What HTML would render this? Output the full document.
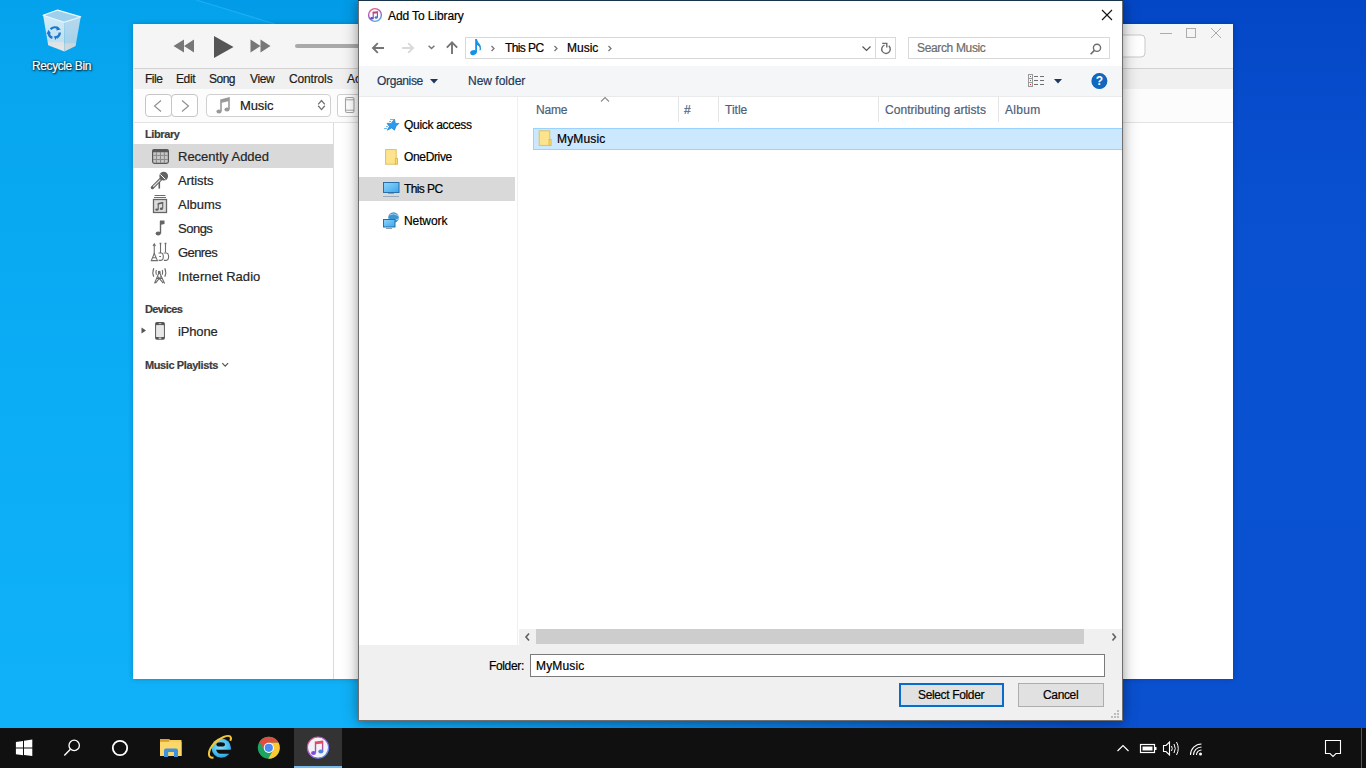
<!DOCTYPE html>
<html><head><meta charset="utf-8">
<style>
*{box-sizing:border-box}
html,body{margin:0;padding:0}
body{width:1366px;height:768px;overflow:hidden;position:relative;font-family:"Liberation Sans",sans-serif;
background:linear-gradient(90deg,rgba(10,80,203,0) 360px,rgba(10,100,212,.55) 700px,#0a50cd 1080px,#0a50cd 1366px),linear-gradient(180deg,#04a2ec 0px,#07a6ef 80px,#0badf5 400px,#10b1f8 728px);}
.a{position:absolute}
.t{position:absolute;white-space:nowrap;line-height:1;-webkit-text-stroke:0.2px currentColor}
svg{position:absolute;overflow:visible}
</style></head><body>

<div class="a" style="left:1122px;top:0px;width:244px;height:728px;background:linear-gradient(180deg,#0447c6 0px,#0850d0 200px,#0852d2 400px,#0a50cf 728px)"></div>
<div class="a" style="left:0px;top:0px;width:1366px;height:24px;background:linear-gradient(180deg,rgba(0,0,0,0),rgba(0,0,0,0))"></div>
<svg style="left:0px;top:0px;" width="400" height="30" viewBox="0 0 400 30"><path d="M275 24 L196 0 L400 0 L400 24 Z" fill="#0090e0" opacity=".35"/><path d="M196 0 L275 24" stroke="#3cc0ff" stroke-width="1.2" opacity=".45"/></svg>
<svg style="left:38px;top:6px;" width="48" height="50" viewBox="0 0 48 50">
<defs>
<linearGradient id="rbl" x1="0" y1="0" x2="0" y2="1"><stop offset="0" stop-color="#d2ebf7"/><stop offset=".72" stop-color="#bfe0f1"/><stop offset=".76" stop-color="#dfe3e6"/><stop offset="1" stop-color="#e6e6e6"/></linearGradient>
<linearGradient id="rbr" x1="0" y1="0" x2="0" y2="1"><stop offset="0" stop-color="#b4d9ee"/><stop offset=".74" stop-color="#a8d2ea"/><stop offset=".78" stop-color="#cdd6dc"/><stop offset="1" stop-color="#d5d8da"/></linearGradient>
</defs>
<path d="M5.1 9.2 L26.1 16.3 L26.4 45.4 L10.2 39.3 Z" fill="url(#rbl)"/>
<path d="M26.1 16.3 L42.7 10.9 L37.6 40 L26.4 45.4 Z" fill="url(#rbr)"/>
<path d="M5.1 9.2 L19.6 4.1 L42.7 10.9 L26.1 16.3 Z" fill="#9dd0ec" stroke="#eefaff" stroke-width="1.1" stroke-linejoin="round"/>
<g fill="none" stroke="#1c78cf" stroke-width="2.3">
<path d="M12.6 23.2 A5.6 5.6 0 0 1 20.2 22.6"/>
<path d="M21.8 26.6 A5.6 5.6 0 0 1 18.6 31.6"/>
<path d="M14.4 31.8 A5.6 5.6 0 0 1 10.8 26.2"/>
</g>
<g fill="#1c78cf">
<path d="M19 20.2 L22.8 23.4 L18.4 24.6z"/>
<path d="M19.8 29.6 L17.6 34 L15.8 30.4z"/>
<path d="M8.6 28.2 L10.4 23.8 L13 27.2z"/>
</g>
</svg>
<div class="t" style="left:32px;top:60px;font-size:12px;color:#fff;letter-spacing:-0.4px;text-shadow:0 0 2px rgba(0,0,0,.95),1px 1px 2px rgba(0,0,0,.9);">Recycle Bin</div>
<div class="a" style="left:133px;top:24px;width:1100px;height:655px;background:#fff;box-shadow:0 0 5px rgba(0,0,0,.22)"></div>
<div class="a" style="left:133px;top:24px;width:1100px;height:44px;background:#f5f5f5"></div>
<div class="a" style="left:133px;top:68px;width:1100px;height:1px;background:#d2d2d2"></div>
<div class="a" style="left:133px;top:69px;width:1100px;height:20px;background:#f0f0f0"></div>
<div class="a" style="left:133px;top:89px;width:1100px;height:33px;background:#fcfcfc"></div>
<div class="a" style="left:133px;top:122px;width:1100px;height:1px;background:#e3e3e3"></div>
<div class="a" style="left:333px;top:123px;width:1px;height:556px;background:#dcdcdc"></div>
<div class="a" style="left:133px;top:24px;width:1100px;height:1px;background:#e9fbff"></div>
<div class="a" style="left:133px;top:24px;width:1px;height:655px;background:#dff6ff"></div>
<svg style="left:133px;top:24px;" width="300" height="44" viewBox="0 0 300 44">
<path d="M40.5 22 L51 15.5 L51 28.5 Z M51 22 L61 15.5 L61 28.5 Z" fill="#777"/>
<path d="M81 12 L100.5 23 L81 34 Z" fill="#555"/>
<path d="M117.5 15.5 L127.5 22 L117.5 28.5 Z M127.5 15.5 L137.5 22 L127.5 28.5 Z" fill="#777"/>
<rect x="162" y="20" width="120" height="4" rx="2" fill="#a9a9a9"/>
</svg>
<svg style="left:1100px;top:24px;" width="133" height="44" viewBox="0 0 133 44">
<rect x="-10" y="11" width="55" height="22" rx="4" fill="#fff" stroke="#c9c9c9"/>
<path d="M60 9.5 H72" stroke="#acacac" stroke-width="1"/>
<rect x="86.5" y="4.5" width="9" height="9" fill="none" stroke="#acacac" stroke-width="1"/>
<path d="M111 4 L121 14 M121 4 L111 14" stroke="#acacac" stroke-width="1"/>
</svg>
<div class="t" style="left:145px;top:73px;font-size:12px;color:#1b1b1b;letter-spacing:-0.5px;">File</div>
<div class="t" style="left:176px;top:73px;font-size:12px;color:#1b1b1b;letter-spacing:-0.4px;">Edit</div>
<div class="t" style="left:209px;top:73px;font-size:12px;color:#1b1b1b;letter-spacing:-0.5px;">Song</div>
<div class="t" style="left:250px;top:73px;font-size:12px;color:#1b1b1b;letter-spacing:-0.4px;">View</div>
<div class="t" style="left:289px;top:73px;font-size:12px;color:#1b1b1b;letter-spacing:-0.15px;">Controls</div>
<div class="t" style="left:347px;top:73px;font-size:12px;color:#1b1b1b;">Account</div>
<svg style="left:133px;top:89px;" width="240" height="33" viewBox="0 0 240 33">
<rect x="12.5" y="5.5" width="26" height="22" rx="3.5" fill="#fff" stroke="#c6c6c6"/>
<rect x="38.5" y="5.5" width="26" height="22" rx="3.5" fill="#fff" stroke="#c6c6c6"/>
<path d="M28 11.5 L21.5 17 L28 22.5" fill="none" stroke="#8c8c8c" stroke-width="1.1"/>
<path d="M49 11.5 L55.5 17 L49 22.5" fill="none" stroke="#8c8c8c" stroke-width="1.1"/>
<rect x="73.5" y="5.5" width="124" height="22" rx="3.5" fill="#fff" stroke="#d0d0d0"/>
<g fill="#999"><path d="M88 22 V11 L96 9 V20" stroke="#999" stroke-width="1.6" fill="none"/><ellipse cx="86" cy="22.5" rx="2.6" ry="2"/><ellipse cx="94" cy="20.5" rx="2.6" ry="2"/><path d="M88 11 L96 9 V12 L88 14z"/></g>
<path d="M185.2 15.4 L188.5 11.6 L191.8 15.4 M185.2 16.8 L188.5 20.6 L191.8 16.8" fill="none" stroke="#707070" stroke-width="1.3"/>
</svg>
<div class="a" style="left:337px;top:94px;width:30px;height:23px;background:#fff;border:1px solid #d0d0d0;border-radius:3px"></div>
<svg style="left:344px;top:96px;" width="12" height="18" viewBox="0 0 12 18"><rect x="1.5" y="1.5" width="8.5" height="15" rx="1.6" fill="none" stroke="#a6a6a6" stroke-width="1.1"/><path d="M1.5 3.8 H10 M1.5 14.2 H10" stroke="#a6a6a6" stroke-width="1"/></svg>
<div class="t" style="left:240px;top:99px;font-size:13px;color:#1b1b1b;letter-spacing:-0.1px;">Music</div>
<div class="t" style="left:145px;top:129px;font-size:11px;color:#3d3d3d;font-weight:bold;letter-spacing:-0.4px;">Library</div>
<div class="a" style="left:133px;top:144px;width:200px;height:24px;background:#d9d9d9"></div>
<div class="t" style="left:178px;top:150px;font-size:13px;color:#262626;">Recently Added</div>
<div class="t" style="left:178px;top:174px;font-size:13px;color:#262626;letter-spacing:-0.1px;">Artists</div>
<div class="t" style="left:178px;top:198px;font-size:13px;color:#262626;">Albums</div>
<div class="t" style="left:178px;top:222px;font-size:13px;color:#262626;letter-spacing:-0.5px;">Songs</div>
<div class="t" style="left:178px;top:246px;font-size:13px;color:#262626;letter-spacing:-0.6px;">Genres</div>
<div class="t" style="left:178px;top:270px;font-size:13px;color:#262626;letter-spacing:0.05px;">Internet Radio</div>
<div class="t" style="left:145px;top:304px;font-size:11px;color:#3d3d3d;font-weight:bold;letter-spacing:-0.6px;">Devices</div>
<div class="t" style="left:178px;top:325px;font-size:13px;color:#262626;letter-spacing:-0.15px;">iPhone</div>
<div class="t" style="left:145px;top:360px;font-size:11px;color:#3d3d3d;font-weight:bold;letter-spacing:-0.4px;">Music Playlists</div>
<svg style="left:140px;top:140px;" width="40" height="240" viewBox="0 0 40 240">
<g>
<rect x="12.6" y="9.6" width="15.8" height="13.8" rx="1.8" fill="#c6c6c6" stroke="#585858" stroke-width="1.2"/>
<path d="M12.2 12.2 V11.4 Q12.2 9.2 14.4 9.2 H26.6 Q28.8 9.2 28.8 11.4 V12.2z" fill="#585858"/>
<path d="M16.4 12 V23 M20.5 12 V23 M24.4 12 V23 M13.2 15.4 H27.8 M13.2 19.5 H27.8" stroke="#8a8a8a" stroke-width="1"/>
</g>
<g>
<path d="M19.3 42 V48.6" stroke="#606060" stroke-width="1.6"/>
<path d="M20.8 39.2 L12.4 47.6" stroke="#606060" stroke-width="3.3" stroke-linecap="round"/>
<path d="M20.4 39.6 L13.2 46.8" stroke="#dedede" stroke-width="1.3"/>
<circle cx="23.7" cy="36.1" r="4.4" fill="#636363"/>
<path d="M20.4 34.4 L25.4 39.4" stroke="#fff" stroke-width="1"/>
</g>
<g>
<path d="M14.5 55.5 H25.5 M14 57.5 H26" stroke="#707070" stroke-width="1"/>
<rect x="13.5" y="59.5" width="13" height="13" fill="#dcdcdc" stroke="#666" stroke-width="1.3"/>
<path d="M18.2 69.4 V64 M22.7 68.6 V62.8" fill="none" stroke="#5e5e5e" stroke-width="1.1"/>
<path d="M17.7 62.9 L23.2 61.8 V63.6 L17.7 64.7z" fill="#5e5e5e"/>
<ellipse cx="16.9" cy="69.6" rx="1.6" ry="1.2" fill="#5e5e5e"/><ellipse cx="21.4" cy="68.8" rx="1.6" ry="1.2" fill="#5e5e5e"/>
</g>
<g fill="#666">
<path d="M20.5 81 V93.5" stroke="#666" stroke-width="1.4"/>
<path d="M20 80.5 H24.5 V84 L20 85z"/>
<ellipse cx="18.2" cy="93.5" rx="2.6" ry="2"/>
</g>
<g stroke="#6e6e6e" stroke-width="1.1" fill="none">
<path d="M14.25 104.5 V114 M20.5 103.5 V113 M25.5 103.5 V112.5"/>
<path d="M13 106 L14.25 103.8 L15.5 106"/>
<path d="M19.6 103.5 H21.4 M24.6 103.5 H26.4" stroke-width="1.4"/>
<path d="M11.3 120.6 L14.25 113.5 L17.4 120.6 Z M12.8 117.8 H15.8"/>
<path d="M18.5 113 H21.6 Q23.3 113.4 23.3 116.6 Q23.3 120.4 21 120.4 H18.6 M19.2 116.5 H21"/>
<path d="M23.8 113 H26.6 Q28.6 113.4 28.6 116.6 Q28.6 120.4 26.2 120.4 H23.9"/>
</g>
<g stroke="#6a6a6a" stroke-width="1.1" fill="none">
<path d="M19.25 132 L14.5 143.4 M19.25 132 L24.6 143.4 M16.4 138.5 H22.2 M17.3 136 L23.2 143.2 M21.3 136 L15.5 143.2"/>
<path d="M16.4 130 Q15.2 132.4 16.4 134.8 M22.2 130 Q23.4 132.4 22.2 134.8 M13.8 128.2 Q11.9 132.5 13.8 136.8 M24.8 128.2 Q26.7 132.5 24.8 136.8"/>
<circle cx="19.25" cy="132.2" r=".9" fill="#6a6a6a"/>
</g>
<path d="M1.5 187.5 L6 190.5 L1.5 193.5 Z" fill="#555"/>
<g>
<rect x="15.1" y="182.1" width="9.8" height="17.6" rx="1.7" fill="#555"/>
<rect x="16.2" y="185.2" width="7.6" height="11.7" fill="#fff"/>
<rect x="16.8" y="185.8" width="6.4" height="10.6" fill="#e8e8e8"/>
<rect x="18.7" y="183.2" width="2.6" height=".9" fill="#ddd"/>
<rect x="18.7" y="197.7" width="2.6" height="1" fill="#fff"/>
</g>
<path d="M82.3 223.2 L85.2 226.2 L88.1 223.2" fill="none" stroke="#555" stroke-width="1.2"/>
</svg>
<div class="a" style="left:358px;top:0px;width:765px;height:721px;background:#fff;box-shadow:0 0 16px rgba(0,0,0,.28),0 2px 8px rgba(0,0,0,.18)"></div>
<div class="a" style="left:358px;top:0px;width:1px;height:721px;background:#6f6f6f"></div>
<div class="a" style="left:1122px;top:0px;width:1px;height:721px;background:#6f6f6f"></div>
<div class="a" style="left:358px;top:720px;width:765px;height:1px;background:#6f6f6f"></div>
<div class="a" style="left:358px;top:0px;width:765px;height:1px;background:#17344a"></div>
<svg style="left:366px;top:7px;" width="18" height="18" viewBox="0 0 18 18">
<defs><linearGradient id="itg" x1=".3" y1="0" x2=".7" y2="1"><stop offset="0" stop-color="#e0607e"/><stop offset=".5" stop-color="#9a5ad0"/><stop offset="1" stop-color="#48b4ea"/></linearGradient>
<linearGradient id="itg2" x1="0" y1="0" x2="0" y2="1"><stop offset="0" stop-color="#c84a6a"/><stop offset="1" stop-color="#5a4fc8"/></linearGradient></defs>
<circle cx="9" cy="8" r="6.4" fill="#fbf8fc" stroke="url(#itg)" stroke-width="1.4"/>
<path d="M6.8 4.8 L11.6 4.2 V6.2 L6.8 6.8z" fill="#b84a6e"/>
<path d="M7.2 4.8 V11.2 M11.4 4.3 V10.4" stroke="url(#itg2)" stroke-width="1.1"/>
<ellipse cx="5.9" cy="11.3" rx="1.6" ry="1.3" fill="#5d4cc0"/><ellipse cx="10.2" cy="10.5" rx="1.6" ry="1.3" fill="#4a78d0"/>
</svg>
<div class="t" style="left:388px;top:10px;font-size:12px;color:#000;letter-spacing:-0.1px;">Add To Library</div>
<svg style="left:1100px;top:8px;" width="14" height="14" viewBox="0 0 14 14"><path d="M2 2 L12 12 M12 2 L2 12" stroke="#111" stroke-width="1.1"/></svg>
<svg style="left:366px;top:36px;" width="100" height="22" viewBox="0 0 100 22">
<path d="M7.2 12 H18 M11.8 7.2 L7 12 L11.8 16.8" fill="none" stroke="#747474" stroke-width="1.9"/>
<path d="M36 12 H46.8 M42.2 7.2 L47 12 L42.2 16.8" fill="none" stroke="#d9d9d9" stroke-width="1.9"/>
<path d="M62.6 9.8 L65.5 12.6 L68.4 9.8" fill="none" stroke="#747474" stroke-width="1.4"/>
<path d="M86 6.6 V18 M80.8 11.6 L86 6.4 L91.2 11.6" fill="none" stroke="#747474" stroke-width="1.9"/>
</svg>
<div class="a" style="left:465px;top:37px;width:431px;height:22px;background:#fff;border:1px solid #d9d9d9"></div>
<div class="a" style="left:875px;top:37px;width:1px;height:22px;background:#d9d9d9"></div>
<svg style="left:466px;top:38px;" width="30" height="20" viewBox="0 0 30 20">
<path d="M10.1 1.2 V14.6" stroke="#1592e6" stroke-width="1.8"/>
<path d="M9.4 1.1 H10.9 Q11.6 4.2 13.6 6.1 Q15.5 8 15 11.2 Q14.7 12.6 13.5 12.6 Q14.3 9.6 12.9 8.2 Q11.9 7.2 10.9 6.9z" fill="#1592e6"/>
<ellipse cx="7.4" cy="14.6" rx="3.3" ry="2.4" fill="#1592e6" transform="rotate(-18 7.4 14.6)"/>
<path d="M25.5 8 L28 10.5 L25.5 13" fill="none" stroke="#777" stroke-width="1.3"/>
</svg>
<div class="t" style="left:505px;top:42px;font-size:12px;color:#000;letter-spacing:-0.6px;">This PC</div>
<svg style="left:546px;top:38px;" width="70" height="20" viewBox="0 0 70 20">
<path d="M8.5 8 L11 10.5 L8.5 13" fill="none" stroke="#777" stroke-width="1.3"/>
<path d="M62.5 8 L65 10.5 L62.5 13" fill="none" stroke="#777" stroke-width="1.3"/>
</svg>
<div class="t" style="left:567px;top:42px;font-size:12px;color:#000;">Music</div>
<svg style="left:855px;top:38px;" width="42" height="20" viewBox="0 0 42 20">
<path d="M7.5 8.5 L11.5 12.5 L15.5 8.5" fill="none" stroke="#555" stroke-width="1.2"/>
<path d="M33.8 7.9 A4.3 4.3 0 1 1 29.5 7.1" fill="none" stroke="#6b6b6b" stroke-width="1.4"/>
<path d="M27.2 5.4 H31.8 V9.6" fill="none" stroke="#6b6b6b" stroke-width="1.4"/>
</svg>
<div class="a" style="left:908px;top:37px;width:202px;height:22px;background:#fff;border:1px solid #d9d9d9"></div>
<div class="t" style="left:917px;top:42px;font-size:12px;color:#6d6d6d;letter-spacing:-0.35px;">Search Music</div>
<svg style="left:1085px;top:40px;" width="20" height="18" viewBox="0 0 20 18">
<circle cx="12" cy="7.8" r="3.6" fill="none" stroke="#6d6d6d" stroke-width="1.4"/>
<path d="M9.4 10.4 L5.6 14.2" stroke="#6d6d6d" stroke-width="1.6"/>
</svg>
<div class="a" style="left:359px;top:66px;width:763px;height:30px;background:#f5f6f7"></div>
<div class="a" style="left:359px;top:96px;width:763px;height:1px;background:#e9eaeb"></div>
<div class="t" style="left:377px;top:75px;font-size:12px;color:#1e395b;letter-spacing:-0.35px;">Organise</div>
<svg style="left:425px;top:76px;" width="16" height="10" viewBox="0 0 16 10"><path d="M5 3 H13 L9 7.5z" fill="#1e395b"/></svg>
<div class="t" style="left:468px;top:75px;font-size:12px;color:#1e395b;">New folder</div>
<svg style="left:1026px;top:72px;" width="40" height="18" viewBox="0 0 40 18">
<g fill="none" stroke="#9a9a9a" stroke-width="1"><rect x="2.5" y="2.5" width="4" height="4"/><rect x="2.5" y="6.5" width="4" height="4"/><rect x="2.5" y="10.5" width="4" height="4"/></g>
<g fill="#666"><rect x="4" y="4" width="1" height="1"/><rect x="4" y="8" width="1" height="1"/><rect x="4" y="12" width="1" height="1" fill="#c33"/></g>
<path d="M8 4.5 H12 M14 4.5 H18 M8 8.5 H12 M14 8.5 H18 M8 12.5 H12 M14 12.5 H18" stroke="#707070" stroke-width="1"/>
<path d="M28 7 H36 L32 11.5z" fill="#1e395b"/>
</svg>
<svg style="left:1090px;top:72px;" width="19" height="19" viewBox="0 0 19 19">
<circle cx="9.4" cy="9.1" r="8" fill="#0e63b5"/>
<circle cx="9.4" cy="9.1" r="7.4" fill="#1268bd"/>
<text x="9.4" y="13.4" font-family="Liberation Sans" font-weight="bold" font-size="12" fill="#fff" text-anchor="middle">?</text>
</svg>
<div class="a" style="left:359px;top:177px;width:156px;height:24px;background:#d9d9d9"></div>
<div class="a" style="left:517px;top:97px;width:1px;height:548px;background:#f0f0f0"></div>
<div class="t" style="left:404px;top:119px;font-size:12px;color:#000;letter-spacing:-0.3px;">Quick access</div>
<div class="t" style="left:404px;top:151px;font-size:12px;color:#000;letter-spacing:-0.35px;">OneDrive</div>
<div class="t" style="left:404px;top:183px;font-size:12px;color:#000;letter-spacing:-0.6px;">This PC</div>
<div class="t" style="left:404px;top:215px;font-size:12px;color:#000;letter-spacing:-0.1px;">Network</div>
<svg style="left:380px;top:114px;" width="24" height="120" viewBox="0 0 24 120">
<path d="M14.4 5.2 L15.4 9.5 L18.9 9.4 L15.9 12.4 L14.5 16.2 L11.6 13.9 L7.3 16.2 L9.4 12.4 L7 9.4 L11.2 9.4z" fill="#2a9cf0" stroke="#1d7fcf" stroke-width=".7" stroke-linejoin="round"/>
<path d="M10 5.5 H14 M9 7.5 H11 M6 12.5 H8 M4 14.5 H7" stroke="#6fb9ee" stroke-width="1"/>
<rect x="5.6" y="35.6" width="10.6" height="14.6" fill="#fde48c" stroke="#dcc068" stroke-width="1"/>
<rect x="15.4" y="44.4" width="2.1" height="5.8" fill="#fbdc66" stroke="#dcbc58" stroke-width="1"/>
<defs><linearGradient id="mon" x1="0" y1="0" x2="1" y2="1"><stop offset="0" stop-color="#8fd6fb"/><stop offset="1" stop-color="#3aa6ee"/></linearGradient></defs>
<rect x="3.5" y="68.5" width="15.5" height="10" fill="url(#mon)" stroke="#2a6ea8" stroke-width="1"/>
<path d="M8 79.5 H14" stroke="#8aa0b5" stroke-width="1"/>
<path d="M3 82.5 H19" stroke="#9aaabb" stroke-width="1"/>
<circle cx="13.5" cy="103.6" r="5.3" fill="#3e95cf"/>
<path d="M9.5 101 Q13.5 98.5 18 101.5 M9 105 Q13 108 18.5 105" stroke="#9ed2f2" stroke-width="1" fill="none"/>
<rect x="3.5" y="105.5" width="11.5" height="7.5" fill="url(#mon)" stroke="#2a6ea8" stroke-width="1"/>
<path d="M6 114.5 H12" stroke="#8aa0b5" stroke-width="1"/>
</svg>
<div class="t" style="left:536px;top:104px;font-size:12px;color:#4c607a;letter-spacing:-0.2px;">Name</div>
<svg style="left:598px;top:94px;" width="14" height="10" viewBox="0 0 14 10"><path d="M3 7.5 L7 3.5 L11 7.5" fill="none" stroke="#8a8a8a" stroke-width="1.1"/></svg>
<div class="t" style="left:684px;top:104px;font-size:12px;color:#4c607a;">#</div>
<div class="t" style="left:725px;top:104px;font-size:12px;color:#4c607a;">Title</div>
<div class="t" style="left:885px;top:104px;font-size:12px;color:#4c607a;letter-spacing:0.05px;">Contributing artists</div>
<div class="t" style="left:1005px;top:104px;font-size:12px;color:#4c607a;letter-spacing:0.3px;">Album</div>
<div class="a" style="left:678px;top:97px;width:1px;height:25px;background:#e5e5e5"></div>
<div class="a" style="left:718px;top:97px;width:1px;height:25px;background:#e5e5e5"></div>
<div class="a" style="left:878px;top:97px;width:1px;height:25px;background:#e5e5e5"></div>
<div class="a" style="left:998px;top:97px;width:1px;height:25px;background:#e5e5e5"></div>
<div class="a" style="left:533px;top:128px;width:589px;height:22px;background:#cce8ff;border:1px solid #99d1ff;border-right:none"></div>
<svg style="left:536px;top:128px;" width="20" height="22" viewBox="0 0 20 22">
<rect x="3.2" y="2.8" width="10.6" height="14.6" fill="#fde48c" stroke="#dcc068" stroke-width="1"/>
<rect x="13" y="11.6" width="2.1" height="5.8" fill="#fbdc66" stroke="#dcbc58" stroke-width="1"/>
</svg>
<div class="t" style="left:557px;top:133px;font-size:12px;color:#000;letter-spacing:0.15px;">MyMusic</div>
<div class="a" style="left:519px;top:629px;width:603px;height:16px;background:#f0f0f0"></div>
<div class="a" style="left:536px;top:629px;width:548px;height:15px;background:#cdcdcd"></div>
<svg style="left:520px;top:629px;" width="14" height="16" viewBox="0 0 14 16"><path d="M9 4.5 L6 8 L9 11.5" fill="none" stroke="#606060" stroke-width="1.6"/></svg>
<svg style="left:1107px;top:629px;" width="14" height="16" viewBox="0 0 14 16"><path d="M5.5 4.5 L8.5 8 L5.5 11.5" fill="none" stroke="#606060" stroke-width="1.6"/></svg>
<div class="a" style="left:359px;top:645px;width:763px;height:75px;background:#f0f0f0"></div>
<div class="t" style="left:489px;top:660px;font-size:12px;color:#000;letter-spacing:-0.35px;">Folder:</div>
<div class="a" style="left:530px;top:654px;width:575px;height:23px;background:#fff;border:1px solid #7a7a7a"></div>
<div class="t" style="left:536px;top:660px;font-size:12px;color:#000;letter-spacing:0.15px;">MyMusic</div>
<div class="a" style="left:899px;top:683px;width:105px;height:24px;background:#e1e1e1;border:2px solid #0a6cc6"></div>
<div class="a" style="left:901px;top:685px;width:101px;height:20px;border:1px solid #cde6f7"></div>
<div class="t" style="left:918px;top:689px;font-size:12px;color:#000;letter-spacing:-0.35px;">Select Folder</div>
<div class="a" style="left:1018px;top:683px;width:86px;height:24px;background:#e1e1e1;border:1px solid #adadad"></div>
<div class="t" style="left:1043px;top:689px;font-size:12px;color:#000;letter-spacing:-0.35px;">Cancel</div>
<svg style="left:1108px;top:707px;" width="12" height="12" viewBox="0 0 12 12"><g fill="#bdbdbd"><rect x="9" y="3" width="2" height="2"/><rect x="6" y="6" width="2" height="2"/><rect x="9" y="6" width="2" height="2"/><rect x="3" y="9" width="2" height="2"/><rect x="6" y="9" width="2" height="2"/><rect x="9" y="9" width="2" height="2"/></g></svg>
<div class="a" style="left:0px;top:728px;width:1366px;height:40px;background:#101010"></div>
<div class="a" style="left:294px;top:728px;width:48px;height:40px;background:#333"></div>
<div class="a" style="left:294px;top:766px;width:48px;height:2px;background:#76b9ed"></div>
<div class="a" style="left:1361px;top:728px;width:1px;height:40px;background:#555"></div>
<svg style="left:0px;top:728px;" width="350" height="40" viewBox="0 0 350 40">
<g fill="#fff">
<path d="M15.9 13.9 L23 12.9 V19.6 H15.9z"/><path d="M24 12.75 L32.3 11.6 V19.6 H24z"/>
<path d="M15.9 20.6 H23 V27.3 L15.9 26.3z"/><path d="M24 20.6 H32.3 V28.1 L24 27z"/>
</g>
<circle cx="74.2" cy="17.4" r="5.2" fill="none" stroke="#fff" stroke-width="1.3"/>
<path d="M70.4 21.2 L64.3 27.6" stroke="#fff" stroke-width="1.4"/>
<circle cx="120" cy="20" r="7.2" fill="none" stroke="#fff" stroke-width="1.8"/>
<g>
<path d="M160 11.1 H169 L170 12 H181.5 V27.9 H160z" fill="#f6cf5a"/>
<rect x="160" y="11.1" width="9.2" height="2.8" fill="#dca02a"/>
<rect x="160" y="13.9" width="21.5" height="14" fill="#fcd76a"/>
<path d="M164 29 V22.6 Q164 20.6 166 20.6 H176 Q178 20.6 178 22.6 V29 H174 V24 H168.2 V29z" fill="#3f92dc"/>
</g>
<g>
<defs><radialGradient id="ieg" cx=".45" cy=".4" r=".7"><stop offset="0" stop-color="#8fe3fb"/><stop offset=".6" stop-color="#47bdf0"/><stop offset="1" stop-color="#1e8fd6"/></radialGradient></defs>
<g transform="translate(221.3 20.1)">
<circle r="9.7" fill="url(#ieg)"/>
<ellipse cx="-0.6" cy="-3.7" rx="4.3" ry="2.2" fill="#101010"/>
<path d="M-5.3 1.7 H10 V5.6 H-1 Q-4 5.6 -5.3 1.7z" fill="#101010"/>
</g>
<path d="M213.5 29.6 C207 30.5 207.5 22.5 214.5 15 C220 9.5 228 6.5 230.3 8.6 C231.6 10 231 11.5 230.2 12.8" fill="none" stroke="#f0c63c" stroke-width="2"/>
</g>
<g transform="translate(268.8 19.8)">
<circle r="11" fill="#1da462"/>
<path d="M9.798 -5 A11 11 0 0 0 -9.229 -5.985 L-4.33 2.5 L0 -5 Z" fill="#dd5040"/>
<path d="M-0.569 10.985 A11 11 0 0 0 9.798 -5 L0 -5 L4.33 2.5 Z" fill="#fcc934"/>
<circle r="5.1" fill="#fff"/>
<circle r="4.1" fill="#4c8bf5"/>
</g>
<g transform="translate(318 19.6)">
<defs><linearGradient id="itt" x1="0" y1="0" x2="1" y2="1"><stop offset="0" stop-color="#f0506a"/><stop offset=".45" stop-color="#a455e0"/><stop offset="1" stop-color="#3fa0f0"/></linearGradient>
<linearGradient id="itn" x1="0" y1="0" x2="0" y2="1"><stop offset="0" stop-color="#e8485e"/><stop offset="1" stop-color="#7d55dc"/></linearGradient></defs>
<circle r="10.6" fill="#f3f3f5" stroke="url(#itt)" stroke-width="1.2"/>
<path d="M-2.5 -6.2 L4.6 -7.1 V-4.1 L-2.5 -3.3z" fill="#e44e63"/>
<path d="M-2.5 -6 V5.2 M4.6 -6.8 V3.8" stroke="url(#itn)" stroke-width="1.4"/>
<ellipse cx="-4.5" cy="5.3" rx="2.5" ry="2" fill="#7d4fd8"/>
<ellipse cx="2.8" cy="4" rx="2.5" ry="2" fill="#4d82e2"/>
</g>
</svg>
<svg style="left:1100px;top:728px;" width="266" height="40" viewBox="0 0 266 40">
<path d="M17.5 23 L23 17.5 L28.5 23" fill="none" stroke="#fff" stroke-width="1.2"/>
<rect x="40.5" y="16.5" width="14" height="8" fill="none" stroke="#fff" stroke-width="1.2"/>
<rect x="42.5" y="18.5" width="10" height="4" fill="#fff"/>
<rect x="55" y="19" width="1.5" height="3" fill="#fff"/>
<path d="M63.5 17.5 H66 L69.5 14 V27 L66 23.5 H63.5z" fill="none" stroke="#fff" stroke-width="1.1"/>
<path d="M71.5 18 Q73 20.5 71.5 23 M74 16 Q76.5 20.5 74 25 M76.5 14 Q80 20.5 76.5 27" fill="none" stroke="#fff" stroke-width="1"/>
<path d="M90.5 27 A11 11 0 0 1 101.5 16 M93.5 27 A8 8 0 0 1 101.5 19 M96.5 27 A5 5 0 0 1 101.5 22" fill="none" stroke="#fff" stroke-width="1.1"/>
<circle cx="100.5" cy="26" r="1.5" fill="#fff"/>
<path d="M225.5 12.5 H240.5 V25.5 H236 L233 28.5 L230 25.5 H225.5z" fill="none" stroke="#fff" stroke-width="1.1"/>
</svg>
</body></html>
